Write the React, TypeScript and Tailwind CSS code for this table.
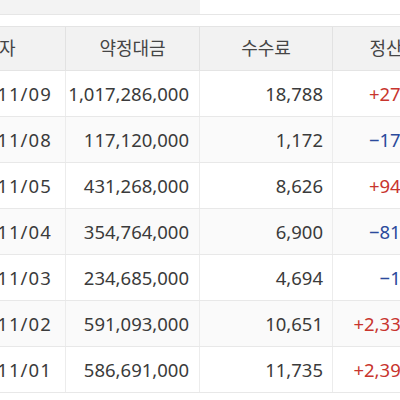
const rows = [
  { date: '2021/11/09', amount: '1,017,286,000', fee: '18,788', settle: '+277,440' },
  { date: '2021/11/08', amount: '117,120,000', fee: '1,172', settle: '−172,012' },
  { date: '2021/11/05', amount: '431,268,000', fee: '8,626', settle: '+943,104' },
  { date: '2021/11/04', amount: '354,764,000', fee: '6,900', settle: '−812,550' },
  { date: '2021/11/03', amount: '234,685,000', fee: '4,694', settle: '−16,220' },
  { date: '2021/11/02', amount: '591,093,000', fee: '10,651', settle: '+2,331,760' },
  { date: '2021/11/01', amount: '586,691,000', fee: '11,735', settle: '+2,395,018' },
];

const headers = ['일자', '약정대금', '수수료', '정산금액'];

export default function App() {
  return (
    <div
      className="h-[400px] w-[400px] overflow-hidden bg-white text-[18.5px] text-[#3b3b3b]"
      style={{ fontFamily: '"Noto Sans", "Noto Sans CJK KR", sans-serif' }}
    >
      <div className="h-[15px] border-b border-[#e6e6e6]">
        <div className="h-[14px] w-[200px] bg-[#f3f3f3]" />
      </div>
      <div className="mt-[11px] ml-[-67px] w-[540px]">
        <div className="grid h-[45px] grid-cols-[133px_134px_133px_140px] border-y border-[#e4e4e4] bg-[#f2f2f2] text-[18px]">
          {headers.map((h) => (
            <div
              key={h}
              className="flex items-center justify-center border-r border-[#e2e2e2] text-[#454545]"
            >
              {h}
            </div>
          ))}
        </div>
        {rows.map((r, i) => (
          <div
            key={r.date}
            className={`grid h-[46px] grid-cols-[133px_134px_133px_140px] border-b border-[#e8e8e8] ${
              i % 2 === 1 ? 'bg-[#fafafa]' : 'bg-white'
            }`}
          >
            <div className="flex items-center justify-end border-r border-[#ececec] pr-[13px] tracking-[0.06em]">
              {r.date}
            </div>
            <div className="flex items-center justify-end border-r border-[#ececec] pr-[10px]">
              {r.amount}
            </div>
            <div className="flex items-center justify-end border-r border-[#ececec] pr-[9px]">
              {r.fee}
            </div>
            <div
              className={`flex items-center justify-end pr-[25px] ${
                r.settle.startsWith('+') ? 'text-[#c8352e]' : 'text-[#2b4a9c]'
              }`}
            >
              {r.settle}
            </div>
          </div>
        ))}
      </div>
    </div>
  );
}
